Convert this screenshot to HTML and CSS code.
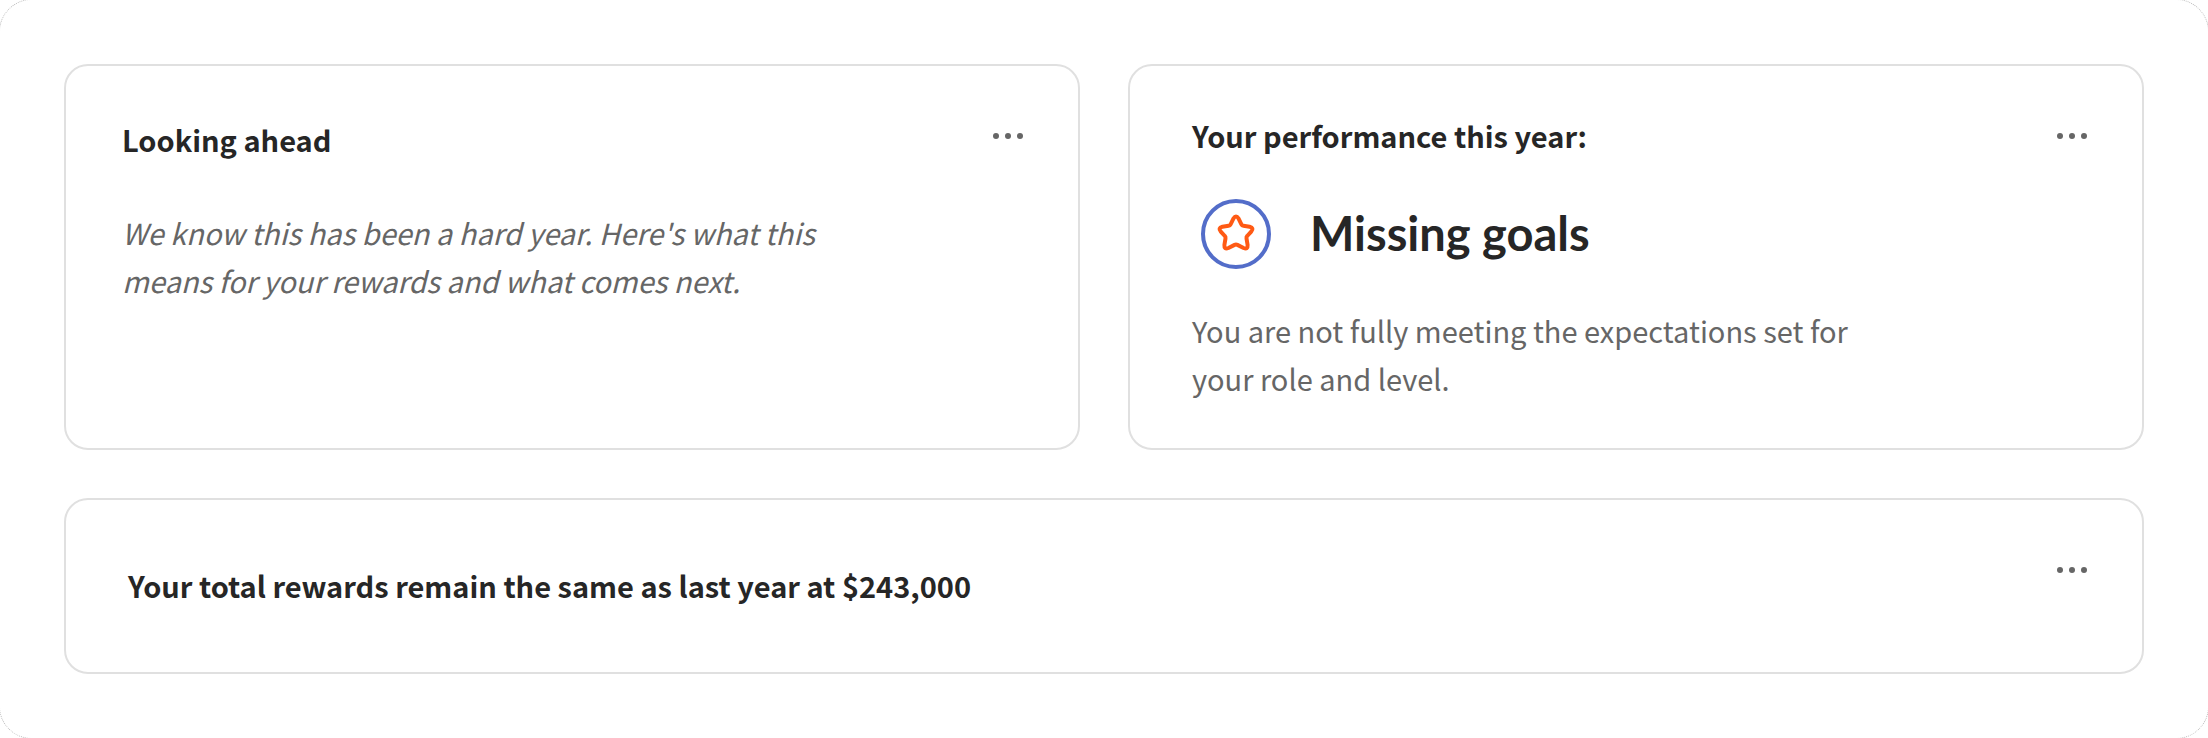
FILE: index.html
```html
<!DOCTYPE html>
<html lang="en">

<head>
  <meta charset="UTF-8">
  <meta name="viewport" content="width=device-width, initial-scale=1.0">
  <title>Performance and rewards</title>
  <link rel="stylesheet" href="styles.css">
</head>

<body>
  <main class="board">
    <section class="card card-ahead">
      <div class="card-body">
        <h2>Looking ahead</h2>
        <p class="note">We know this has been a hard year. Here's what this means for your rewards and what comes next.</p>
      </div>
      <button type="button" class="menu" aria-label="More options">
        <svg viewBox="0 0 48 48"><circle cx="12" cy="24" r="3"/><circle cx="24" cy="24" r="3"/><circle cx="36" cy="24" r="3"/></svg>
      </button>
    </section>

    <section class="card card-performance">
      <div class="card-body">
        <h2>Your performance this year:</h2>
        <div class="rating">
          <svg class="badge" viewBox="0 0 72 72">
            <circle cx="36" cy="36" r="33" fill="none" stroke="#536dc9" stroke-width="4"/>
            <path d="M33.4 20.6Q36 16.4 38.6 20.6L41.4 26.4Q42 27.6 43.4 27.8L49.6 28.8Q54.4 30 51.2 33.6L47.2 38Q46.2 39 46.5 40.4L47.6 47Q48 51.8 43.6 50L37.4 46.9Q36 46.2 34.6 46.9L28.4 50Q24 51.8 24.4 47L25.5 40.4Q25.8 39 24.8 38L20.8 33.6Q17.6 30 22.4 28.8L28.6 27.8Q30 27.6 30.6 26.4Z" fill="none" stroke="#ff5a14" stroke-width="4" stroke-linejoin="round"/>
          </svg>
          <strong>Missing goals</strong>
        </div>
        <p>You are not fully meeting the expectations set for your role and level.</p>
      </div>
      <button type="button" class="menu" aria-label="More options">
        <svg viewBox="0 0 48 48"><circle cx="12" cy="24" r="3"/><circle cx="24" cy="24" r="3"/><circle cx="36" cy="24" r="3"/></svg>
      </button>
    </section>

    <section class="card card-rewards">
      <div class="card-body">
        <h2>Your total rewards remain the same as last year at $243,000</h2>
      </div>
      <button type="button" class="menu" aria-label="More options">
        <svg viewBox="0 0 48 48"><circle cx="12" cy="24" r="3"/><circle cx="24" cy="24" r="3"/><circle cx="36" cy="24" r="3"/></svg>
      </button>
    </section>
  </main>
</body>

</html>
```
FILE: styles.css
```css
* {
  box-sizing: border-box;
}

body {
  margin: 0;
  font-family: "Noto Sans CJK SC", "Noto Sans", sans-serif;
  font-size: 29px;
  line-height: 48px;
  background-color: #fff;
  color: #666;
}

.board {
  display: grid;
  grid-template-columns: 1fr 1fr;
  gap: 48px;
  padding: 64px;
  border-radius: 32px;
  outline: 1px dotted #bbb;
}

.card {
  display: flex;
  align-items: flex-start;
  padding: 46px;
  border: 2px solid #e0e0e0;
  border-radius: 24px;
}

.card-body {
  flex: 1;
  padding: 0 16px;
}

.card-ahead .card-body {
  padding: 4px 10px;
}

.card-rewards {
  grid-column: 1 / -1;
}

.card-rewards .card-body {
  padding: 16px;
}

h2,
p {
  margin: 0;
  font-size: 29px;
}

h2 {
  color: #262626;
  font-weight: 600;
  line-height: 46px;
  padding-bottom: 2px;
}

p {
  max-width: 700px;
}

.note {
  margin-top: 44px;
  font-style: italic;
}

.rating {
  display: flex;
  align-items: center;
  gap: 38px;
  margin: 38px 0 36px 8px;
  color: #262626;
}

.rating strong {
  padding-bottom: 2px;
  font-family: Lato, sans-serif;
  font-size: 47px;
  font-weight: 700;
}

.badge {
  width: 72px;
  height: 72px;
}

.menu {
  width: 48px;
  height: 48px;
  padding: 0;
  border: none;
  background: none;
  cursor: pointer;
}

.menu svg {
  display: block;
  fill: #666;
}

@media (max-width: 900px) {
  .board {
    grid-template-columns: 1fr;
  }
}
```
